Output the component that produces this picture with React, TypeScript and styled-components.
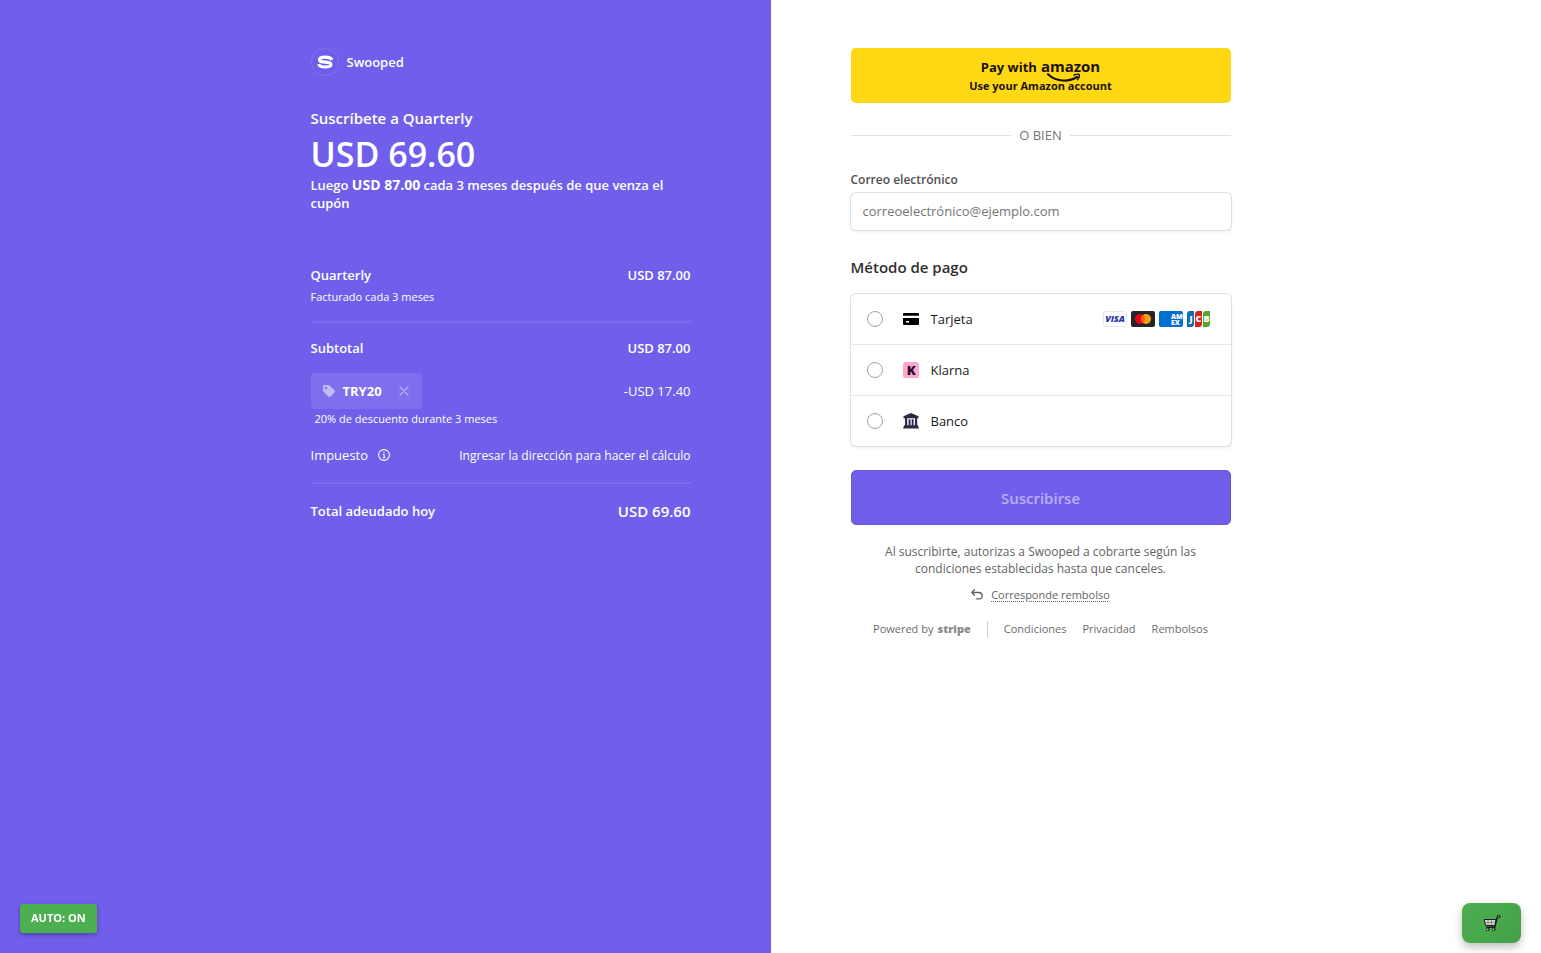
import React from 'react';
import styled, { createGlobalStyle } from 'styled-components';

const GlobalStyle = createGlobalStyle`
  *, *::before, *::after { box-sizing: border-box; }
  body {
    margin: 0;
    background: #fff;
    color: #1a1a1a;
    font-family: "Open Sans", "Noto Sans", sans-serif;
    font-size: 13px;
    line-height: 20px;
  }
  h1, h2, p, ul { margin: 0; padding: 0; }
  button, input { font: inherit; }
  svg { display: block; flex: none; }
`;

const Page = styled.div`
  display: grid;
  grid-template-columns: 1fr 1fr;
  min-height: 100vh;
`;

const SummaryPanel = styled.section`
  display: flex;
  justify-content: flex-end;
  padding: 48px 80px;
  background: #715fec;
  color: #fff;
`;

const PaymentPanel = styled.main`
  padding: 48px 80px;
  background: #fff;
`;

const Column = styled.div`
  width: 100%;
  max-width: 380px;
`;

const Brand = styled.div`
  display: flex;
  align-items: center;
  gap: 8px;
  height: 28px;
  font-weight: 600;
`;

const PlanTitle = styled.h1`
  margin-top: 30px;
  font-size: 15px;
  font-weight: 600;
  line-height: 24px;
`;

const Price = styled.div`
  margin-top: 2px;
  font-size: 34px;
  font-weight: 600;
  line-height: 44px;
`;

const PriceNote = styled.p`
  font-weight: 600;
  line-height: 18px;

  strong {
    font-size: 14px;
    font-weight: 700;
    line-height: 16px;
  }
`;

const Lines = styled.div`
  margin-top: 53px;
`;

const Line = styled.div<{ $strong?: boolean }>`
  display: flex;
  justify-content: space-between;
  align-items: center;
  font-weight: ${p => (p.$strong ? 600 : 400)};
`;

const Small = styled.p<{ $inset?: boolean }>`
  margin-top: ${p => (p.$inset ? 1 : 3)}px;
  padding-left: ${p => (p.$inset ? 4 : 0)}px;
  font-size: 11px;
  font-weight: 500;
  line-height: 18px;
`;

const Divider = styled.hr`
  margin: 15px 0;
  border: 0;
  border-top: 2px solid rgba(255, 255, 255, 0.07);
`;

const CouponRow = styled(Line)`
  margin-top: 15px;
`;

const Coupon = styled.div`
  display: flex;
  align-items: center;
  gap: 8px;
  height: 36px;
  padding: 0 12px;
  border-radius: 4px;
  background: rgba(255, 255, 255, 0.1);
  font-weight: 700;
`;

const IconButton = styled.button`
  display: flex;
  padding: 0;
  border: 0;
  background: none;
  color: inherit;
  cursor: pointer;
`;

const RemoveButton = styled(IconButton)`
  margin-left: 8px;
`;

const TaxRow = styled(Line)`
  align-items: baseline;
  margin: 17px 0 16px;
`;

const TaxLabel = styled.span`
  display: flex;
  align-items: center;
  gap: 10px;
`;

const TaxHint = styled.span`
  font-size: 12px;
  font-weight: 500;
`;

const TotalRow = styled(Line)`
  margin-top: 17px;
`;

const TotalValue = styled.span`
  font-size: 15px;
`;

const AmazonButton = styled.button`
  display: flex;
  flex-direction: column;
  align-items: center;
  justify-content: center;
  width: 100%;
  height: 55px;
  padding: 2px 0 0;
  border: 0;
  border-radius: 5px;
  background: #fdd813;
  color: #1c1008;
  cursor: pointer;
`;

const AmazonTitle = styled.span`
  display: flex;
  gap: 4px;
  font-size: 13px;
  font-weight: 700;
  line-height: 18px;
`;

const AmazonLogo = styled.span`
  position: relative;
  font-size: 15px;
  font-weight: 700;
  line-height: 16px;

  svg { position: absolute; top: 14px; left: 6px; }
`;

const AmazonNote = styled.span`
  font-size: 11px;
  font-weight: 700;
  line-height: 20px;
`;

const Separator = styled.div`
  display: flex;
  align-items: center;
  gap: 8px;
  margin-top: 22px;
  color: #757575;

  &::before, &::after {
    content: "";
    flex: 1;
    height: 1px;
    background: #e2e2e2;
  }
`;

const FieldLabel = styled.label`
  display: block;
  margin-top: 26px;
  color: #505050;
  font-size: 12px;
  font-weight: 600;
  line-height: 18px;
`;

const EmailInput = styled.input`
  display: block;
  width: 100%;
  height: 37px;
  margin-top: 4px;
  padding: 0 12px 1px;
  border: 0;
  border-radius: 5px;
  background: #fff;
  box-shadow: 0 0 0 1px #e0e0e0, 0 2px 4px rgba(0, 0, 0, 0.07);
  color: #1a1a1a;

  &::placeholder { color: #757575; opacity: 1; }
`;

const MethodsTitle = styled.h2`
  margin-top: 25px;
  color: #303030;
  font-size: 15px;
  font-weight: 600;
  line-height: 24px;
`;

const Methods = styled.div`
  margin-top: 15px;
  border-radius: 5px;
  box-shadow: 0 0 0 1px #e0e0e0, 0 2px 4px rgba(0, 0, 0, 0.07);
`;

const Method = styled.label`
  display: flex;
  align-items: center;
  height: 50px;
  padding: 0 20px 0 16px;
  cursor: pointer;

  & + & {
    height: 51px;
    border-top: 1px solid #e6e6e6;
  }
`;

const Radio = styled.input`
  appearance: none;
  width: 16px;
  height: 16px;
  margin: 0 20px 0 0;
  border: 1px solid #a3a3a3;
  border-radius: 50%;

  &:checked { border: 5px solid #715fec; }
`;

const MethodName = styled.span`
  flex: 1;
  margin-left: 12px;
`;

const Cards = styled.span`
  display: flex;
  gap: 4px;
`;

const SubmitButton = styled.button`
  width: 100%;
  height: 55px;
  margin-top: 24px;
  border: 1px solid #6a5bd0;
  border-radius: 5px;
  background: #715fec;
  color: #b9aff5;
  font-size: 15px;
  font-weight: 600;
`;

const Legal = styled.p`
  margin: 18px 0 9px;
  padding: 0 24px;
  color: #636363;
  font-size: 12px;
  line-height: 17px;
  text-align: center;
`;

const Refund = styled.div`
  display: flex;
  align-items: center;
  justify-content: center;
  gap: 8px;
  color: #636363;
  font-size: 11px;
  line-height: 18px;

  a {
    color: inherit;
    text-decoration: underline dotted;
    text-underline-offset: 2px;
  }
`;

const Footer = styled.footer`
  display: flex;
  align-items: center;
  justify-content: center;
  gap: 16px;
  margin-top: 16px;
  color: #6b6b6b;
  font-size: 11px;
  line-height: 18px;

  a { color: inherit; text-decoration: none; }
`;

const Powered = styled.a`
  display: flex;
  gap: 4px;

  strong { color: #8b8b8b; font-weight: 800; }
`;

const FooterRule = styled.span`
  width: 1px;
  height: 16px;
  background: #d0d0d0;
`;

const AutoBadge = styled.button`
  position: fixed;
  left: 20px;
  bottom: 20px;
  height: 29px;
  padding: 0 11px 2px;
  border: 0;
  border-radius: 3px;
  background: #4caf50;
  box-shadow: 0 2px 4px rgba(0, 0, 0, 0.3);
  color: #fff;
  font-size: 11px;
  font-weight: 700;
  cursor: pointer;
`;

const CartButton = styled.button`
  position: fixed;
  right: 20px;
  bottom: 10px;
  display: flex;
  align-items: center;
  justify-content: center;
  width: 59px;
  height: 40px;
  padding: 0;
  border: 0;
  border-radius: 8px;
  background: linear-gradient(135deg, #4caf50, #43a047);
  box-shadow: 0 4px 8px rgba(0, 0, 0, 0.25);
  cursor: pointer;
`;

const SwoopedIcon = () => (
  <svg width="28" height="28" viewBox="0 0 28 28" aria-hidden="true">
    <circle cx="14" cy="14" r="13.5" fill="#6e5de8" stroke="#8072ee" />
    <path d="M20.8 12C20.200 9.900 18 9.200 14.200 9.200c-3.600 0-5.700.5-5.700 2.400 0 1.900 2 2.200 5.700 2.500 3.700.3 5.700.6 5.700 2.400 0 1.900-2.200 2.500-5.700 2.500-3.800 0-6-.8-6.600-2.900" fill="none" stroke="#fff" strokeWidth="3.200" />
  </svg>
);

const TagIcon = () => (
  <svg width="12" height="12" viewBox="0 0 12 12" aria-hidden="true">
    <path fill="#c3bbf7" fillRule="evenodd" d="M0 1.500A1.500 1.500 0 0 1 1.500 0h4a1.500 1.500 0 0 1 1.060.44l5 5a1.500 1.500 0 0 1 0 2.120l-4 4a1.500 1.500 0 0 1-2.120 0l-5-5A1.500 1.500 0 0 1 0 5.500zM3 4.200A1.200 1.200 0 1 0 3 1.800a1.200 1.200 0 0 0 0 2.400z" />
  </svg>
);

const CloseIcon = () => (
  <svg width="12" height="12" viewBox="0 0 12 12" aria-hidden="true">
    <path d="M2 2l8 8M10 2l-8 8" stroke="#b9b0f6" strokeWidth="1.200" strokeLinecap="round" />
  </svg>
);

const InfoIcon = () => (
  <svg width="12" height="12" viewBox="0 0 12 12" fill="none" stroke="#fff" aria-hidden="true">
    <circle cx="6" cy="6" r="5.400" strokeWidth="1.100" />
    <path d="M4.800 5.500H6.200V8.600M4.600 8.700H7.600" strokeWidth="1" />
    <circle cx="6" cy="3.500" r=".75" fill="#fff" stroke="none" />
  </svg>
);

const SmileIcon = () => (
  <svg width="36" height="11" viewBox="0 0 36 11" fill="none" stroke="#1c1008" aria-hidden="true">
    <path d="M1 2.200C9 9.600 21 10.600 30 5" strokeWidth="2.200" strokeLinecap="round" />
    <path d="M27 3c3-1 5-.9 5.300-.3.300.7-.3 2.900-1.800 4.900" strokeWidth="1.500" strokeLinecap="round" />
  </svg>
);

const CardIcon = () => (
  <svg width="16" height="16" viewBox="0 0 16 16" aria-hidden="true">
    <path fill="#000" fillRule="evenodd" d="M0 3A1 1 0 0 1 1 2h14A1 1 0 0 1 16 3V4.800H0zM0 7h16v6a1 1 0 0 1-1 1h-14A1 1 0 0 1 0 13zM3 10v1.500h3V10z" />
  </svg>
);

const KlarnaIcon = () => (
  <svg width="16" height="16" viewBox="0 0 16 16" overflow="visible" aria-hidden="true">
    <rect width="16" height="16" rx="2.500" fill="#ffa8cd" />
    <text x="8.300" y="12.500" textAnchor="middle" fontFamily="Open Sans, sans-serif" fontSize="13" fontWeight="800" fill="#2b0a2e">K</text>
  </svg>
);

const BankIcon = () => (
  <svg width="16" height="16" viewBox="0 0 16 16" fill="#2a2a45" aria-hidden="true">
    <path d="M8 0l7.500 3.300v2H.5v-2zM2 5.300h2.200v7H2zM5.600 6.300h1.900v6H5.600zM8.700 6.300h1.900v6H8.700zM12 5.300h2.200v7H12zM1.200 12.300h13.600l1.200 3.200H0z" />
  </svg>
);

const cardFont = { fontFamily: 'Open Sans, sans-serif', fontWeight: 800 };

const VisaCard = () => (
  <svg width="24" height="16" viewBox="0 0 24 16" aria-label="Visa">
    <rect x=".5" y=".5" width="23" height="15" rx="2" fill="#fff" stroke="#e6e6ee" />
    <text {...cardFont} x="12" y="11" textAnchor="middle" fontSize="9" fontStyle="italic" fill="#2536a8">VISA</text>
  </svg>
);

const MasterCard = () => (
  <svg width="24" height="16" viewBox="0 0 24 16" aria-label="Mastercard">
    <rect width="24" height="16" rx="2" fill="#252525" />
    <circle cx="9" cy="8" r="5" fill="#eb001b" />
    <circle cx="15" cy="8" r="5" fill="#f79e1b" />
    <path d="M12 4a5 5 0 0 1 0 8 5 5 0 0 1 0-8z" fill="#ff5f00" />
  </svg>
);

const AmexCard = () => (
  <svg width="24" height="16" viewBox="0 0 24 16" aria-label="American Express">
    <rect width="24" height="16" rx="2" fill="#016fd0" />
    <g {...cardFont} fill="#fff" fontSize="7">
      <text x="12" y="7.500">AM</text>
      <text x="12" y="14">EX</text>
    </g>
  </svg>
);

const JcbCard = () => (
  <svg width="24" height="16" viewBox="0 0 24 16" aria-label="JCB">
    <path fill="#0f6fae" d="M3 0h4v13a3 3 0 0 1-3 3H0V3a3 3 0 0 1 3-3z" />
    <path fill="#d3261f" d="M11 0h4v13a3 3 0 0 1-3 3H8V3a3 3 0 0 1 3-3z" />
    <path fill="#55a630" d="M19 0h4v13a3 3 0 0 1-3 3h-4V3a3 3 0 0 1 3-3z" />
    <g {...cardFont} fill="#fff" fontSize="9" textAnchor="middle">
      <text x="4" y="11">J</text>
      <text x="11.500" y="11">C</text>
      <text x="19.500" y="11">B</text>
    </g>
  </svg>
);

const ReturnIcon = () => (
  <svg width="12" height="12" viewBox="0 0 12 12" fill="none" stroke="#636363" strokeWidth="1.300" strokeLinecap="round" strokeLinejoin="round" aria-hidden="true">
    <path d="M3.500 .8L.8 3.500l2.700 2.700M1 3.500h7a3 3 0 0 1 0 6.300H5.500" />
  </svg>
);

const CartIcon = () => (
  <svg width="18" height="18" viewBox="0 0 18 18" fill="none" strokeLinejoin="round" strokeLinecap="round" aria-hidden="true">
    <path d="M1.500 5.500h11.500l-1 6H3z" fill="#d4d4d4" stroke="#1b1b1b" strokeWidth="1" />
    <path d="M5 6v5M8.500 6v5M2.500 8.500h10" stroke="#777" strokeWidth=".7" />
    <path d="M15.500 2.800L14.200 3.500 11.800 13.300H3.800" stroke="#1b1b1b" strokeWidth="1.400" />
    <circle cx="15.600" cy="2.600" r="1.400" fill="#888" stroke="#1b1b1b" />
    <circle cx="4.800" cy="15.300" r="1.300" fill="#ddd" stroke="#1b1b1b" />
    <circle cx="10.800" cy="15.300" r="1.300" fill="#ddd" stroke="#1b1b1b" />
  </svg>
);

const methods = [
  { id: 'card', name: 'Tarjeta', icon: <CardIcon /> },
  { id: 'klarna', name: 'Klarna', icon: <KlarnaIcon /> },
  { id: 'bank', name: 'Banco', icon: <BankIcon /> },
];

export default function App() {
  return (
    <>
      <GlobalStyle />
      <Page>
        <SummaryPanel>
          <Column>
            <Brand><SwoopedIcon />Swooped</Brand>
            <PlanTitle>Suscríbete a Quarterly</PlanTitle>
            <Price>USD 69.60</Price>
            <PriceNote>Luego <strong>USD 87.00</strong> cada 3 meses después de que venza el cupón</PriceNote>
            <Lines>
              <Line $strong><span>Quarterly</span><span>USD 87.00</span></Line>
              <Small>Facturado cada 3 meses</Small>
              <Divider />
              <Line $strong><span>Subtotal</span><span>USD 87.00</span></Line>
              <CouponRow>
                <Coupon>
                  <TagIcon />TRY20
                  <RemoveButton type="button" aria-label="Quitar cupón"><CloseIcon /></RemoveButton>
                </Coupon>
                <span>-USD 17.40</span>
              </CouponRow>
              <Small $inset>20% de descuento durante 3 meses</Small>
              <TaxRow>
                <TaxLabel>Impuesto <IconButton type="button" aria-label="Información"><InfoIcon /></IconButton></TaxLabel>
                <TaxHint>Ingresar la dirección para hacer el cálculo</TaxHint>
              </TaxRow>
              <Divider />
              <TotalRow $strong><span>Total adeudado hoy</span><TotalValue>USD 69.60</TotalValue></TotalRow>
            </Lines>
          </Column>
        </SummaryPanel>
        <PaymentPanel>
          <Column>
            <AmazonButton type="button">
              <AmazonTitle>Pay with <AmazonLogo>amazon<SmileIcon /></AmazonLogo></AmazonTitle>
              <AmazonNote>Use your Amazon account</AmazonNote>
            </AmazonButton>
            <Separator>O BIEN</Separator>
            <FieldLabel htmlFor="email">Correo electrónico</FieldLabel>
            <EmailInput id="email" type="email" placeholder="correoelectrónico@ejemplo.com" />
            <MethodsTitle>Método de pago</MethodsTitle>
            <Methods>
              {methods.map(m => (
                <Method key={m.id}>
                  <Radio type="radio" name="method" value={m.id} />
                  {m.icon}
                  <MethodName>{m.name}</MethodName>
                  {m.id === 'card' && <Cards><VisaCard /><MasterCard /><AmexCard /><JcbCard /></Cards>}
                </Method>
              ))}
            </Methods>
            <SubmitButton type="button">Suscribirse</SubmitButton>
            <Legal>Al suscribirte, autorizas a Swooped a cobrarte según las condiciones establecidas hasta que canceles.</Legal>
            <Refund><ReturnIcon /><a href="#rembolso">Corresponde rembolso</a></Refund>
            <Footer>
              <Powered href="#stripe">Powered by <strong>stripe</strong></Powered>
              <FooterRule />
              <a href="#condiciones">Condiciones</a>
              <a href="#privacidad">Privacidad</a>
              <a href="#rembolsos">Rembolsos</a>
            </Footer>
          </Column>
        </PaymentPanel>
      </Page>
      <AutoBadge type="button">AUTO: ON</AutoBadge>
      <CartButton type="button" aria-label="Carrito"><CartIcon /></CartButton>
    </>
  );
}
